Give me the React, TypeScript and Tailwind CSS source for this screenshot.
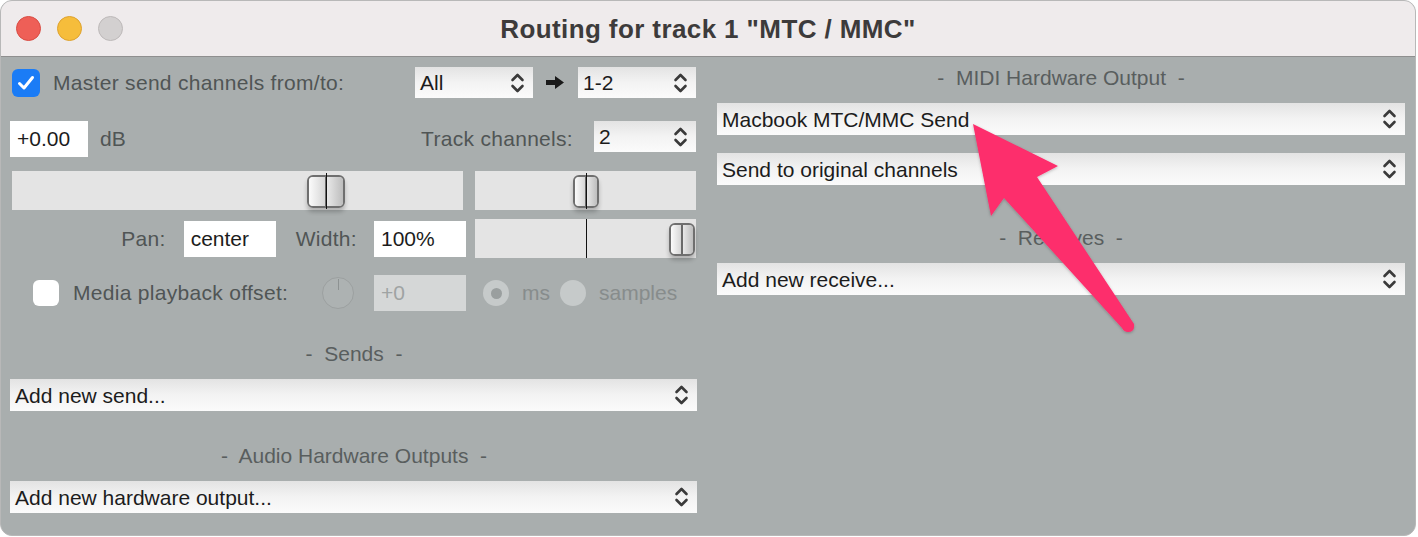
import React from "react";

const F = "font-['Liberation_Sans',Arial,sans-serif]";

function Chevrons({ className = "" }: { className?: string }) {
  return (
    <svg width="15" height="22" viewBox="0 0 15 22" className={className}>
      <polyline points="2.5,8 7.5,3 12.5,8" fill="none" stroke="#3a3a3a" strokeWidth="2.6" strokeLinecap="round" strokeLinejoin="round" />
      <polyline points="2.5,14 7.5,19 12.5,14" fill="none" stroke="#3a3a3a" strokeWidth="2.6" strokeLinecap="round" strokeLinejoin="round" />
    </svg>
  );
}

function Select({ text, className = "" }: { text: string; className?: string }) {
  return (
    <div className={`flex items-center justify-between pl-[5px] pr-[8px] bg-linear-to-b from-[#e3e3e3] via-[#f3f3f3] to-[#fbfbfb] text-[21px] text-[#1c1c1c] ${className}`}>
      <span className="leading-none">{text}</span>
      <Chevrons />
    </div>
  );
}

function Thumb({ className = "" }: { className?: string }) {
  return (
    <div className={`absolute flex rounded-[6px] border-2 border-[#6f6f6f] overflow-hidden shadow-[0_4px_4px_rgba(0,0,0,0.22)] ${className}`}>
      <div className="flex-1 bg-linear-to-r from-[#fbfbfb] to-[#d6d6d6]" />
      <div className="w-[2px] bg-[#6a6a6a]" />
      <div className="flex-1 bg-linear-to-r from-[#e8e8e8] to-[#bdbdbd]" />
    </div>
  );
}

function Section({ text }: { text: string }) {
  return (
    <div className="h-[24px] flex items-center justify-center text-[21px] text-[#595e5e] whitespace-pre">
      {`-  ${text}  -`}
    </div>
  );
}

export default function App() {
  return (
    <div className={`w-[1418px] h-[537px] bg-white ${F}`}>
      <div className="relative w-[1416px] h-[536px] rounded-[12px] border border-[#b8b8b8] overflow-hidden bg-[#a9aeae] flex flex-col">
        {/* Title bar */}
        <div className="relative h-[56px] shrink-0 bg-[#efebec] border-b border-[#8f8f8f] flex items-center">
          <div className="flex items-center gap-[16px] pl-[15px]">
            <div className="w-[25px] h-[25px] rounded-full bg-[#ee5f57] border border-[#d94c43]" />
            <div className="w-[25px] h-[25px] rounded-full bg-[#f6bd3b] border border-[#dea22e]" />
            <div className="w-[25px] h-[25px] rounded-full bg-[#d3d0d0] border border-[#bdb9b9]" />
          </div>
          <div className="absolute left-0 right-0 top-0 h-[56px] flex items-center justify-center pointer-events-none">
            <span className="text-[26px] font-bold text-[#3d3b3b] tracking-[0.4px]">Routing for track 1 "MTC / MMC"</span>
          </div>
        </div>

        {/* Body */}
        <div className="flex flex-1 pl-[9px] pr-[10px]">
          {/* Left column */}
          <div className="w-[688px] flex flex-col text-[#505555]">
            {/* Row 1 */}
            <div className="mt-[10px] h-[31px] flex items-center">
              <div className="ml-[2px] w-[28px] h-[28px] rounded-[6px] bg-[#1b7cf6] flex items-center justify-center">
                <svg width="20" height="20" viewBox="0 0 20 20">
                  <polyline points="3.5,10.5 8,15 16.5,4.5" fill="none" stroke="white" strokeWidth="3" strokeLinecap="round" strokeLinejoin="round" />
                </svg>
              </div>
              <span className="ml-[13px] text-[21px] tracking-[0.3px]">Master send channels from/to:</span>
              <div className="flex-1" />
              <Select text="All" className="w-[118px] h-[31px]" />
              <svg width="18" height="13" viewBox="0 0 18 13" className="ml-[13px]">
                <polygon points="0,4 9,4 9,0 18,6.5 9,13 9,9 0,9" fill="#1a1a1a" />
              </svg>
              <Select text="1-2" className="ml-[14px] w-[118px] h-[31px]" />
              <div className="w-[2px]" />
            </div>

            {/* Row 2 */}
            <div className="mt-[23px] h-[36px] flex items-center">
              <div className="w-[78px] h-[36px] bg-white flex items-center pl-[7px] text-[21px] text-[#1c1c1c]">+0.00</div>
              <span className="ml-[12px] text-[21px]">dB</span>
              <div className="flex-1" />
              <span className="text-[21px] tracking-[0.3px]">Track channels:</span>
              <Select text="2" className="ml-[21px] w-[102px] h-[31px] self-start" />
              <div className="w-[2px]" />
            </div>

            {/* Row 3: sliders */}
            <div className="mt-[14px] h-[39px] flex">
              <div className="relative ml-[2px] w-[451px] h-[39px] bg-[#e4e4e4]">
                <Thumb className="left-[295px] top-[4px] w-[38px] h-[33px]" />
                <div className="absolute left-[314px] top-[2px] w-px h-[36px] bg-[#111]" />
              </div>
              <div className="relative ml-[12px] w-[221px] h-[39px] bg-[#e4e4e4]">
                <Thumb className="left-[98px] top-[4px] w-[26px] h-[33px]" />
                <div className="absolute left-[111px] top-[2px] w-px h-[36px] bg-[#111]" />
              </div>
            </div>

            {/* Row 4 */}
            <div className="mt-[9px] h-[39px] flex items-center justify-end">
              <span className="text-[21px] tracking-[0.3px]">Pan:</span>
              <div className="ml-[18px] w-[92px] h-[36px] bg-white flex items-center pl-[7px] text-[21px] text-[#1c1c1c]">center</div>
              <span className="ml-[20px] text-[21px] tracking-[0.3px]">Width:</span>
              <div className="ml-[17px] w-[92px] h-[36px] bg-white flex items-center pl-[7px] text-[21px] text-[#1c1c1c]">100%</div>
              <div className="relative ml-[9px] w-[221px] h-[39px] bg-[#e4e4e4]">
                <div className="absolute left-[111px] top-0 w-px h-[39px] bg-[#111]" />
                <Thumb className="left-[194px] top-[4px] w-[26px] h-[33px]" />
              </div>
              <div className="w-[2px]" />
            </div>

            {/* Row 5 */}
            <div className="mt-[17px] h-[36px] flex items-center">
              <div className="ml-[23px] w-[26px] h-[26px] rounded-[6px] bg-white" />
              <span className="ml-[14px] w-[217px] text-[21px] tracking-[0.3px] whitespace-nowrap">Media playback offset:</span>
              <div className="relative ml-[32px] w-[32px] h-[32px] rounded-full border border-[#9ca0a0] bg-[#adb2b2]">
                <div className="absolute left-[15px] top-[1px] w-px h-[11px] bg-[#8d9292]" />
              </div>
              <div className="ml-[20px] w-[92px] h-[36px] bg-[#d5d7d7] flex items-center pl-[7px] text-[21px] text-[#9fa3a3]">+0</div>
              <div className="ml-[17px] w-[26px] h-[26px] rounded-full bg-[#c6caca] flex items-center justify-center">
                <div className="w-[11px] h-[11px] rounded-full bg-[#9a9f9f]" />
              </div>
              <span className="ml-[13px] w-[27px] text-[21px] text-[#878c8c]">ms</span>
              <div className="ml-[11px] w-[26px] h-[26px] rounded-full bg-[#c6caca]" />
              <span className="ml-[13px] text-[21px] text-[#878c8c]">samples</span>
            </div>

            <div className="mt-[31px]">
              <Section text="Sends" />
            </div>
            <Select text="Add new send..." className="mt-[13px] w-[687px] h-[32px]" />

            <div className="mt-[33px]">
              <Section text="Audio Hardware Outputs" />
            </div>
            <Select text="Add new hardware output..." className="mt-[13px] w-[687px] h-[32px]" />
          </div>

          {/* Right column */}
          <div className="ml-[19px] w-[688px] flex flex-col">
            <div className="mt-[9px]">
              <Section text="MIDI Hardware Output" />
            </div>
            <Select text="Macbook MTC/MMC Send" className="mt-[13px] w-[688px] h-[32px]" />
            <Select text="Send to original channels" className="mt-[18px] w-[688px] h-[32px]" />
            <div className="mt-[41px]">
              <Section text="Receives" />
            </div>
            <Select text="Add new receive..." className="mt-[13px] w-[688px] h-[32px]" />
          </div>
        </div>

        {/* Annotation arrow overlay */}
        <svg className="absolute left-0 top-0 pointer-events-none" width="1416" height="536" viewBox="0 0 1416 536">
          <defs>
            <filter id="sh" x="-20%" y="-20%" width="140%" height="140%">
              <feDropShadow dx="0" dy="1" stdDeviation="1.5" floodColor="#000" floodOpacity="0.25" />
            </filter>
          </defs>
          <path
            d="M972,123 L1057,165 L1036,176 L1133,323 Q1134,331 1127,331 Q1123,331 1121,327 L1003,197 L990,215 Z"
            fill="#fd2d6c"
            filter="url(#sh)"
          />
        </svg>
      </div>
    </div>
  );
}
